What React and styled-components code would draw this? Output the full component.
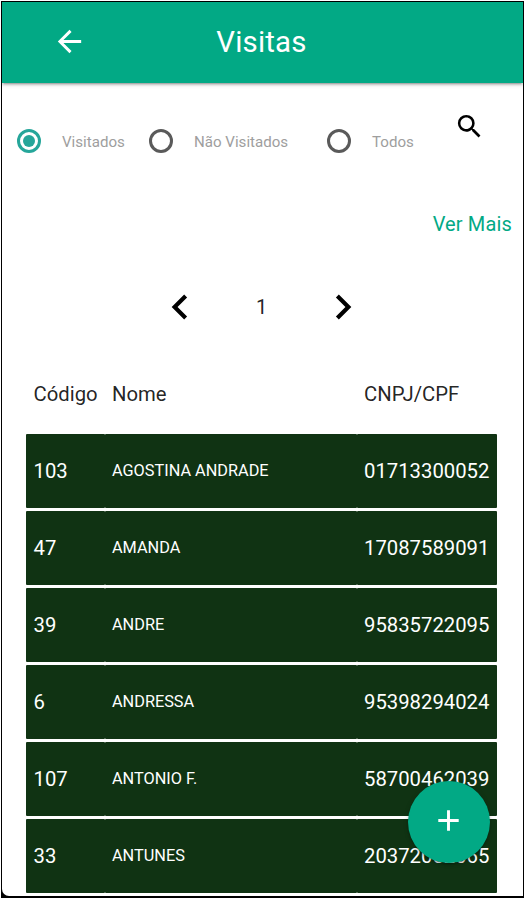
import styled, { createGlobalStyle } from "styled-components";
import { MdArrowBack, MdSearch, MdNavigateBefore, MdNavigateNext, MdAdd } from "react-icons/md";

const GlobalStyle = createGlobalStyle`
    * {
        box-sizing: border-box;
    }

    body {
        margin: 0;
        background: #ffffff;
        color: rgba(0, 0, 0, 0.87);
        font-family: Roboto, sans-serif;
        overflow: hidden;
    }

    button {
        display: flex;
        padding: 0;
        border: none;
        background: none;
        font: inherit;
    }
`;

const Screen = styled.div`
    position: relative;
    width: 523px;
    height: 897px;
    margin: 1px;
    border: 1px solid #000000;
    border-bottom-width: 2px;
    background: #000000;
    overflow: hidden;
`;

const Page = styled.div`
    height: 894px;
    border-bottom-left-radius: 7px;
    background: #ffffff;
`;

const Header = styled.header`
    display: grid;
    grid-template-columns: 1fr auto 1fr;
    align-items: center;
    height: 81px;
    padding: 0 0 2px 50px;
    background: #02a985;
    color: #ffffff;
    box-shadow: 0 2px 2px 0 rgba(0, 0, 0, 0.14), 0 3px 1px -2px rgba(0, 0, 0, 0.12), 0 1px 5px 0 rgba(0, 0, 0, 0.2);
`;

const BackButton = styled.button`
    color: #ffffff;
    font-size: 35px !important;
`;

const Title = styled.h1`
    margin: 0 52px 0 0;
    font-size: 29.4px;
    font-weight: 400;
    letter-spacing: 0.2px;
`;

const Filters = styled.div`
    display: flex;
    align-items: center;
    height: 116px;
    padding-left: 15px;
`;

const Option = styled.label`
    display: flex;
    align-items: center;
    gap: 21px;
    width: ${props=>props.$width};
    color: #9e9e9e;
    font-size: 15.1px;
    white-space: nowrap;

    > span:last-child {
        padding-top: 1px;
    }
`;

const Radio = styled.span`
    display: flex;
    align-items: center;
    justify-content: center;
    width: 24px;
    height: 24px;
    border: 3px solid ${props=>props.$checked ? "#26a69a" : "#5a5a5a"};
    border-radius: 50%;

    &::after {
        content: "";
        width: 12px;
        height: 12px;
        border-radius: 50%;
        background: ${props=>props.$checked ? "#26a69a" : "transparent"};
    }
`;

const SearchButton = styled.button`
    margin-bottom: 29px;
    color: #000000;
    font-size: 31px !important;
`;

const More = styled.a`
    display: block;
    height: 24px;
    margin: 13px 11px 0;
    color: #02a985;
    font-size: 20px;
    line-height: 24px;
    letter-spacing: 0.15px;
    text-align: right;
`;

const Pager = styled.nav`
    display: flex;
    align-items: center;
    justify-content: center;
    gap: 51px;
    height: 50px;
    margin-top: 46px;
    padding-right: 2px;
    font-size: 20px;
`;

const PageButton = styled.button`
    color: #000000;
    font-size: 50px !important;
`;

const Table = styled.div`
    display: flex;
    flex-direction: column;
    gap: 3px;
    margin: 25px 25px 0 24px;
    font-size: 20.3px;
`;

const Row = styled.div`
    display: grid;
    grid-template-columns: 79px 252px 140px;
    height: 74px;
    color: #ffffff;
`;

const HeadRow = styled(Row)`
    color: rgba(0, 0, 0, 0.87);
`;

const Cell = styled.div`
    display: flex;
    align-items: center;
    padding: ${props=>props.$small ? "0 0 2px 7px" : "0 0 0 7px"};
    border-radius: 1px;
    background: ${props=>props.$head ? "none" : "#103313"};
    font-size: ${props=>props.$small ? "16.3px" : "inherit"};
    white-space: nowrap;

    &:first-child {
        padding-left: 7.5px;
    }
`;

const AddButton = styled.button`
    position: absolute;
    right: 33px;
    bottom: 33px;
    align-items: center;
    justify-content: center;
    width: 82px;
    height: 82px;
    padding: 0 1px 3px 0 !important;
    border-radius: 50%;
    background: #02a985 !important;
    color: #ffffff;
    font-size: 35px !important;
    box-shadow: 0 2px 2px 0 rgba(0, 0, 0, 0.14), 0 3px 1px -2px rgba(0, 0, 0, 0.12), 0 1px 5px 0 rgba(0, 0, 0, 0.2);
`;

const visits = [
    { code: "103", name: "AGOSTINA ANDRADE", doc: "01713300052" },
    { code: "47", name: "AMANDA", doc: "17087589091" },
    { code: "39", name: "ANDRE", doc: "95835722095" },
    { code: "6", name: "ANDRESSA", doc: "95398294024" },
    { code: "107", name: "ANTONIO F.", doc: "58700462039" },
    { code: "33", name: "ANTUNES", doc: "20372052065" },
];

const App = () => {
    return (
        <>
            <GlobalStyle/>
            <Screen>
                <Page>
                    <Header>
                        <BackButton><MdArrowBack/></BackButton>
                        <Title>Visitas</Title>
                    </Header>
                    <Filters>
                        <Option $width="132px"><Radio $checked/><span>Visitados</span></Option>
                        <Option $width="178px"><Radio/><span>Não Visitados</span></Option>
                        <Option $width="127px"><Radio/><span>Todos</span></Option>
                        <SearchButton><MdSearch/></SearchButton>
                    </Filters>
                    <More>Ver Mais</More>
                    <Pager>
                        <PageButton><MdNavigateBefore/></PageButton>
                        <span>1</span>
                        <PageButton><MdNavigateNext/></PageButton>
                    </Pager>
                    <Table>
                        <HeadRow>
                            <Cell $head>Código</Cell>
                            <Cell $head>Nome</Cell>
                            <Cell $head>CNPJ/CPF</Cell>
                        </HeadRow>
                        {visits.map(visit => (
                            <Row key={visit.code}>
                                <Cell>{visit.code}</Cell>
                                <Cell $small>{visit.name}</Cell>
                                <Cell>{visit.doc}</Cell>
                            </Row>
                        ))}
                    </Table>
                </Page>
                <AddButton><MdAdd/></AddButton>
            </Screen>
        </>
    )
}

export default App;
